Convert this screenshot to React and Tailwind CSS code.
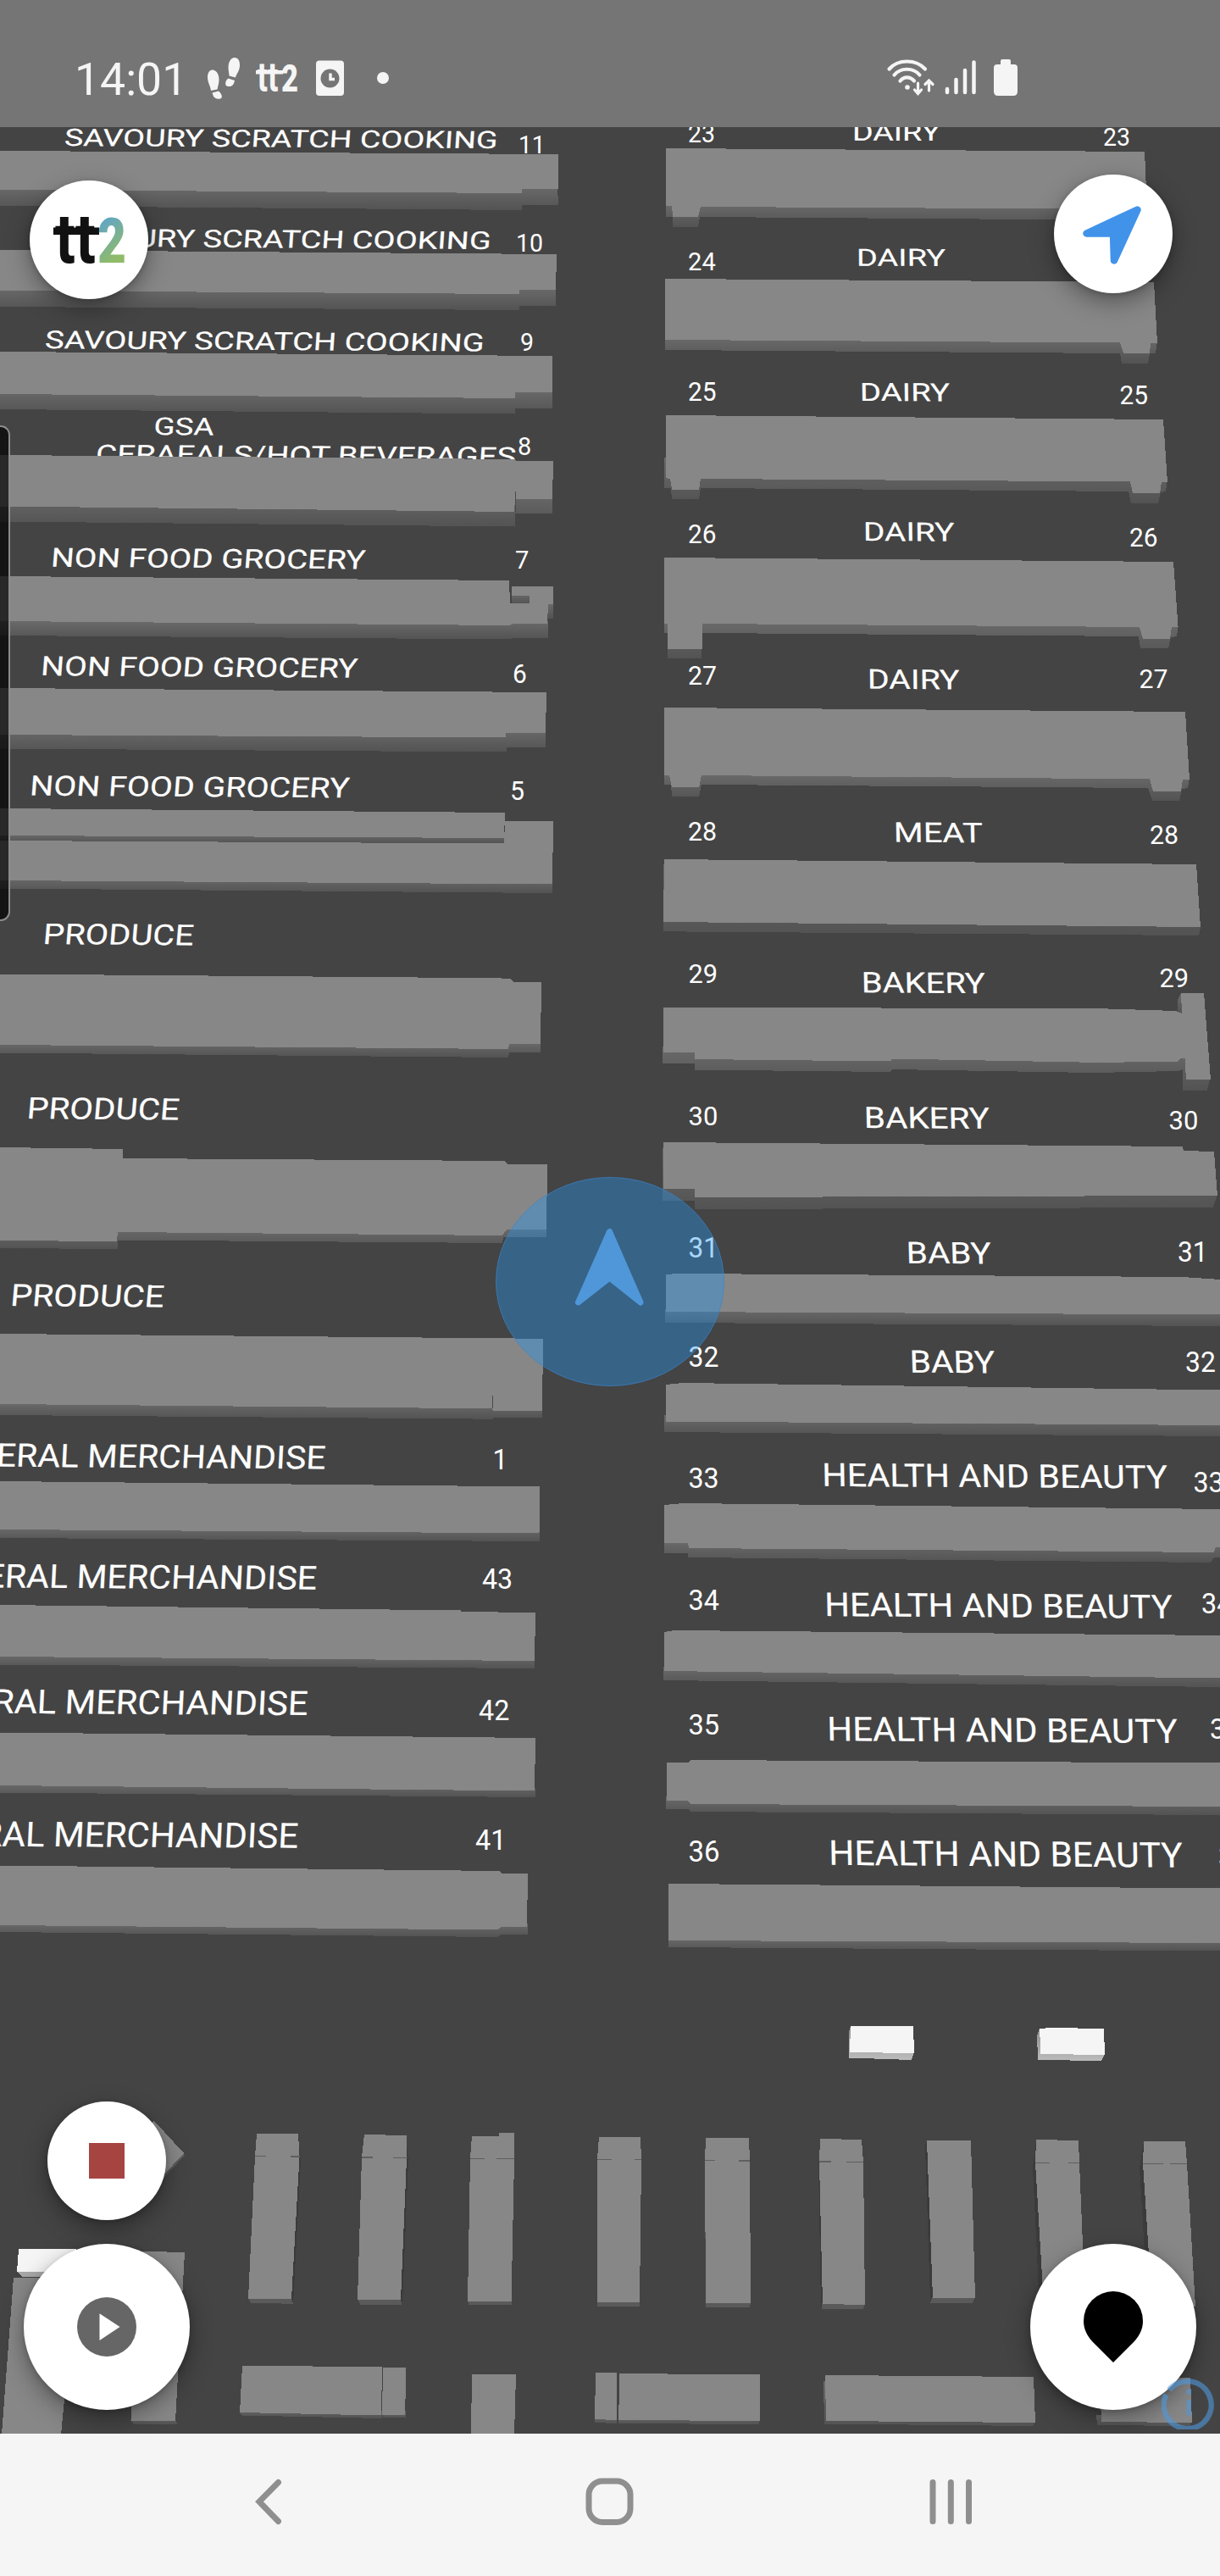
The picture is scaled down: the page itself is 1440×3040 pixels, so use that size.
import React from "react";

// Shelves: top face and extruded side face, in map coordinates.
const SHELVES = [
  { side: "0,220 0,243 616,248 616,242 659,242.5 658,220", top: "0,178 659,182 659,223 616,223 615.5,228 0,224" },
  { side: "0,340 0,362 612.5,366 612.5,361 656,361 656,340", top: "0,295 657,300 656,342 612.5,342 612.5,347 0,343" },
  { side: "0,462 0,483 607.5,488.5 607.5,482 652,482 652,460", top: "0,415 652,420 652,463 607.5,463 607.5,470 0,465" },
  { side: "0,590 0,615.5 607.5,621.5 607.5,606 652,606.5 652,580", top: "0,537 608,542 609,543.5 653,544 652,588.5 608,588.5 607,604 0,597.5" },
  { side: "604,700 625,700 625,713 604,713", top: "0,0" },
  { side: "646,712 653,712 653,730 646,730", top: "0,0" },
  { side: "0,733 0,750 601,754.5 606,753 647,753 647,733", top: "0,680 601,685 602,712 625,712.5 625,703 604,703 604,692 653,692 653,713 647,713 646,736 606,736 601,738 0,733" },
  { side: "0,862 0,883.5 598,887.5 598,882 644,882 644,860", top: "0,812 645,817 644,864.5 597.5,864.5 597,870.5 0,867" },
  { side: "0,1035 0,1048.5 652,1054 652,1040", top: "0,992 595,995.5 596,969 653,969.5 652,1043.5 0,1039" },
  { side: "0,984 0,992 595,995.5 595,987", top: "0,954 596,959 595,989 0,986" },
  { side: "0,1230 0,1242.5 600,1248 601,1241.5 638,1241.5 638,1230", top: "0,1149.5 590,1154.3 603,1155.5 606,1159 639,1159 638,1232 601,1232 600,1238 0,1233" },
  { side: "0,1462 0,1473 139,1474 139,1463.5 593,1467 594,1459.5 645,1459.5 645,1450 139,1452", top: "0,1354 145,1356 145,1367 595,1370 600,1374 646,1374 645,1451 598,1451 593,1458 139,1454 138,1465 0,1464" },
  { side: "0,1655 0,1670 581.5,1674.7 581.5,1672.5 640,1672.5 640,1660", top: "0,1574 641,1579.8 640,1665 582,1665 581,1662.3 0,1657" },
  { side: "0,1803 0,1815 636.5,1819 636.5,1807", top: "0,1748 637,1754.5 636.5,1809.5 0,1805" },
  { side: "0,1953 0,1964.5 631,1969 631,1957", top: "0,1894 544,1900.5 544,1902 632,1903 631,1960 0,1955" },
  { side: "0,2105 0,2115.5 632,2121 632,2110", top: "0,2044.5 632,2051 631,2113.5 0,2107" },
  { side: "0,2270 0,2280 587,2286 592,2283 622.5,2283 622.5,2270", top: "0,2201.5 589,2208 593,2211.3 623,2211.3 622,2274 592,2274 587,2277.5 0,2272" },

  { side: "786,240 786,256 794,256 794,268 824,268 826,256 1354,260 1354,244", top: "786,175 1351,179 1354,247 827,244 824,256 794,255.5 793,243 786,243" },
  { side: "785,398 785,413 1322,417 1324,429 1355,429 1357,417 1364,416.5 1366,402", top: "785,329 1362,333 1366,405 1358,405 1357,417 1326,417 1322,404.5 785,401" },
  { side: "784,540 784,576 792,576 793,589 825,589.5 827,576 1332,580 1335,594 1367,594 1370,581 1376,580 1378,566", top: "785.5,490 1373,495 1378,569 1371,569 1369,582 1337,582 1334,568.5 827,565 825,578 793,577.5 791,565 785.5,564" },
  { side: "784,733 784,747 788,747 788,777 828,777 829,747 1344,751 1346,765 1379,765 1382,752 1389,751 1390.5,738", top: "784,658 1385,663 1390.6,740 1383,740 1381,754 1349,754 1345,740 829,736 829,766 788,766 788,736 784,736" },
  { side: "784,913 784,926 792,926 793,940 825,940 828,926 1355,930 1360,944.5 1392,945 1395,931 1402,930 1404,918", top: "784,835 1399,840 1404,920 1396,920 1394,934 1361,934 1357,919.5 828,915 825,929 793,929 790,915 784,915" },
  { side: "783,1020 783,1099.3 1415,1104 1417.5,1092", top: "784,1014 1412,1020 1417,1094 783,1088" },
  { side: "1390,1180 1394,1172 1396,1197 1390,1196", top: "0,0" },
  { side: "782,1235 782,1255 820,1255 820,1262.5 1051,1265 1053,1262 1290,1266 1390,1264 1396,1262 1396,1286.5 1425,1286.5 1428.5,1272 1420,1235", top: "783,1189 1292,1190 1388,1193 1395,1196 1394,1172 1421,1172 1429,1274 1400,1274 1398.5,1249 1393,1249 1389,1253 1290,1253.8 1053,1249.5 1051,1252.5 820,1250 820,1242 783,1242" },
  { side: "782,1355 782,1417 820,1417 820,1427 1432,1425 1437,1409", top: "783,1348 1396,1353 1397,1358 1433,1359 1437,1411 820,1413 820,1403 783,1403" },
  { side: "785,1545 785,1561 1440,1565 1440,1549", top: "785.5,1504 800,1503 1396,1507 1440,1510 1440,1551.5 785.5,1548" },
  { side: "784,1670 784,1690 1440,1695 1440,1680", top: "785.5,1634 806,1632 1440,1640.5 1440,1682 785.5,1677.5" },
  { side: "784,1819 784,1833 812,1833 812,1838 1429,1844 1433,1838 1440,1838 1440,1824", top: "784,1776 806,1774 1440,1781 1440,1826 1435,1826 1433,1832 813,1827 812,1821 784,1821" },
  { side: "783,1967 783,1983 1440,1991 1440,1978", top: "784,1926 796,1924 1440,1930 1440,1980.5 784,1972" },
  { side: "786,2120 786,2135 812,2135 815,2138 1440,2142 1440,2130", top: "787,2080 812,2080 815,2077 1440,2080.5 1440,2132 815,2129 812,2125 787,2125" },
  { side: "789,2287 789,2298 1440,2302.5 1440,2290", top: "789,2223 1440,2228.5 1440,2293 789,2290" },

  { side: "286,2840 283,2847 286,2850.5 451,2854 451,2845", top: "286,2792 451,2793 450,2850.5 283,2847" },
  { side: "451,2845 452,2853 478.5,2853 478.5,2845", top: "452,2794 479.5,2794 478,2850 451,2850" },
  { side: "0,0", top: "557,2802 609,2802 607,2873 556,2873" },
  { side: "702,2850 702,2859 728,2860 728,2850", top: "703,2800 727.5,2800 728.5,2856 702,2855" },
  { side: "730,2850 730,2860 896,2861 897,2850", top: "731.5,2801 897,2802.5 897,2857 730,2856" },
  { side: "972,2810 973,2860.5 1219,2863 1222,2858", top: "974,2803 1220,2805 1222,2859 975,2857" },
  { side: "1294,2850 1295,2862 1404,2863 1407,2858", top: "1298,2806 1405,2806 1407,2859 1300,2858" },
  { side: "0,0", top: "16,2688 90,2688 72,2873 2,2873" },
  { side: "157,2850 154,2856 158,2861 210,2861 206,2855", top: "155,2656.5 218,2658 207,2857 155,2857" },
  { side: "182,2510 218,2543 190,2574", top: "182,2503 217,2541 192,2568 140,2541" },
];

// Checkout lanes: shadowed flank, front, top and the seam marks.
const LANES = [
  { flank: "352,2518 355,2550 346,2719 343,2713", front: "293,2712 296,2718 346,2718.7 344,2712", top: "303,2518 352,2518 353.5,2545 344,2713 293,2713 301,2545", seam: "M301 2544.5H314M343 2545H354" },
  { flank: "479,2520 482,2550 475,2719 472,2713", front: "422,2713 425,2719.5 474,2719.5 473,2713", top: "430,2519 480,2520 480,2547 473,2714 422,2714 427,2545", seam: "M427 2546H440M464 2546.3H481" },
  { flank: "0,0", front: "552,2714 553,2720 603.5,2720.5 603.5,2715", top: "557,2520.5 589,2520.5 589,2517 607,2517 607,2548 603.5,2716 552,2715.5 555,2547", seam: "M555 2547.3H572M586 2547.3H607" },
  { flank: "0,0", front: "705,2716 705,2722 755,2722.5 755,2716", top: "707,2522 756,2522 757,2549 755,2717 705,2717 705,2548", seam: "M705 2548.5H722M749 2548.7H757" },
  { flank: "0,0", front: "832,2560 833,2723.3 885,2723.3 886,2716", top: "833,2523 884,2523.5 885,2550 886,2718 833,2718 832,2549", seam: "M832 2549.5H844M872 2550H885" },
  { flank: "966,2535 966,2553 969,2724 972,2719", front: "970,2718 970,2725 1019,2725 1021,2718", top: "968,2524 1017,2525 1019,2551 1021,2720 971,2719 967,2551", seam: "M967 2551H981M999 2551.2H1019" },
  { flank: "1094,2526 1092,2533 1098,2716 1102,2712", front: "1100,2711 1098,2718 1148,2718 1151,2710", top: "1094,2526 1146,2526 1151,2712 1101,2712", seam: "" },
  { flank: "1223,2525 1219,2558 1227,2724 1232,2720", front: "0,0", top: "1223,2525 1273,2526 1274,2553 1281,2720 1232,2720 1222,2552", seam: "M1222 2552.3H1239M1261 2552.7H1274" },
  { flank: "1350,2527 1345,2558 1355,2724 1360,2722", front: "0,0", top: "1350,2527 1399,2527 1401,2553 1411,2722 1360,2722 1349,2553", seam: "M1349 2553.3H1373M1381 2553.3H1401" },
];

// Section names: text, left, right, left baseline, right baseline, cap height, slant
const NAMES = [
  ["SAVOURY SCRATCH COOKING", 75.5, 587, 172, 175, 20, -3.5],
  ["SAVOURY SCRATCH COOKING", 64, 579, 290.5, 294, 20.5, -3.5],
  ["SAVOURY SCRATCH COOKING", 52.5, 571, 411, 414.5, 20.7, -3.5],
  ["GSA", 181, 252, 513, 513.5, 20.3, -3],
  ["CERAEALS/HOT BEVERAGES", 112.5, 608.5, 546, 549, 21, -3.5],
  ["NON FOOD GROCERY", 59.5, 430.5, 668.7, 671.3, 22, -4],
  ["NON FOOD GROCERY", 47.5, 421.5, 797, 799.7, 22.5, -4],
  ["NON FOOD GROCERY", 34.5, 411.5, 938.5, 941.3, 23.3, -4],
  ["PRODUCE", 50, 228, 1114, 1115.3, 24, -4.5],
  ["PRODUCE", 31, 211, 1320, 1321.5, 25, -4.5],
  ["PRODUCE", 11.5, 193, 1541, 1542.5, 25.5, -4.5],
  ["GENERAL MERCHANDISE", -85, 384, 1730, 1733.5, 27, -2.5],
  ["GENERAL MERCHANDISE", -99, 373.5, 1872.8, 1875.7, 27.5, -2.5],
  ["GENERAL MERCHANDISE", -115, 363, 2021, 2024, 28, -2.5],
  ["GENERAL MERCHANDISE", -130, 351.5, 2178, 2180.7, 29, -2.5],
  ["DAIRY", 1006, 1110, 165.8, 166, 20, 0],
  ["DAIRY", 1011, 1116, 313.7, 314, 20, 0.5],
  ["DAIRY", 1015, 1121, 473, 473.5, 21, 1],
  ["DAIRY", 1019, 1126.5, 638, 638.7, 21.7, 1],
  ["DAIRY", 1024, 1132.5, 812.5, 813.3, 22.7, 1],
  ["MEAT", 1055, 1160, 993.5, 994.3, 23, 1.5],
  ["BAKERY", 1017, 1163, 1171.2, 1172.2, 24, 1.5],
  ["BAKERY", 1020, 1168, 1331, 1332, 24.7, 1.5],
  ["BABY", 1070, 1170, 1490.7, 1491.3, 25, 2],
  ["BABY", 1074, 1174.5, 1619.7, 1620.3, 26, 2],
  ["HEALTH AND BEAUTY", 970.5, 1378, 1753.8, 1756.5, 27, 1.5],
  ["HEALTH AND BEAUTY", 973.5, 1384, 1907, 1909.8, 27.5, 1.5],
  ["HEALTH AND BEAUTY", 976.5, 1390, 2054, 2057, 28, 1.5],
  ["HEALTH AND BEAUTY", 978.5, 1396, 2200.8, 2203.7, 29, 1.5],
];

// Aisle numbers: text, left, baseline, cap height
const NUMBERS = [
  ["11", 612, 180.7, 20.7], ["10", 609, 297, 21], ["9", 614, 414.3, 21], ["8", 611, 537.3, 21.3],
  ["7", 608, 671.3, 21.5], ["6", 605, 805.7, 22], ["5", 602, 944.3, 22.3], ["1", 581.5, 1734.3, 23.3],
  ["43", 569, 1875.3, 23.7], ["42", 565, 2029.5, 23.8], ["41", 561, 2183.3, 24],
  ["23", 812, 168, 21], ["24", 812, 318.5, 21.5], ["25", 812, 473.2, 22], ["26", 812, 640.8, 22],
  ["27", 812, 807.8, 22.3], ["28", 812, 991.8, 22.4], ["29", 812.5, 1160.2, 22.7], ["30", 812.5, 1328.4, 22.8],
  ["31", 812.5, 1484, 23.3], ["32", 812.5, 1613.2, 23.5], ["33", 812.5, 1756.2, 23.7], ["34", 812.5, 1899.5, 23.8],
  ["35", 812.5, 2046.8, 24], ["36", 812.5, 2197.3, 24.3],
  ["23", 1302, 172, 21], ["25", 1321.5, 476.8, 22], ["26", 1333, 644.8, 22], ["27", 1344.5, 811.8, 22.3],
  ["28", 1357, 996, 22.4], ["29", 1368.5, 1165.1, 22.7], ["30", 1379.5, 1333.4, 22.8], ["31", 1390, 1488.5, 23.3],
  ["32", 1399, 1618.7, 23.5], ["33", 1408.5, 1760.8, 23.7], ["34", 1418, 1904.4, 23.8], ["35", 1428, 2051.8, 24],
  ["36", 1438, 2202.8, 24.3],
];

function Name({ row }) {
  const [text, x1, x2, y1, y2, cap, slant] = row;
  const angle = (Math.atan2(y2 - y1, x2 - x1) * 180) / Math.PI;
  return (
    <text
      transform={`translate(${x1} ${y1}) rotate(${angle}) skewX(${slant})`}
      fontSize={cap / 0.711}
      textLength={x2 - x1}
      lengthAdjust="spacingAndGlyphs"
    >
      {text}
    </text>
  );
}

function StoreMap() {
  return (
    <svg className="block h-[2722px] w-[1440px] overflow-hidden" viewBox="0 150 1440 2722" role="img" aria-label="Store map">
      <defs>
        <linearGradient id="side" x1="0" y1="0" x2="0" y2="1">
          <stop offset="0" stopColor="#6a6a6a" />
          <stop offset="1" stopColor="#535353" />
        </linearGradient>
        <linearGradient id="paleSide" x1="0" y1="0" x2="0" y2="1">
          <stop offset="0" stopColor="#8e8e8e" />
          <stop offset="1" stopColor="#bcbcbc" />
        </linearGradient>
      </defs>
      <g fill="#fff" fontFamily="Roboto, sans-serif" stroke="#fff" strokeWidth="0.15">
        {NAMES.map((row, i) => <Name key={i} row={row} />)}
      </g>
      <g shapeRendering="crispEdges">
        {SHELVES.map((s, i) => (
          <g key={i}>
            <polygon points={s.side} fill="url(#side)" />
            <polygon points={s.top} fill="#878787" />
          </g>
        ))}
        {LANES.map((l, i) => (
          <g key={i}>
            <polygon points={l.flank} fill="#3b3b3b" />
            <polygon points={l.front} fill="#5a5a5a" />
            <polygon points={l.top} fill="#878787" />
            <path d={l.seam} stroke="#5f5f5f" strokeWidth="1.2" />
          </g>
        ))}
        <path d="M581.5 1647V1662M608 580V604" stroke="#4a4a4a" strokeWidth="1" />
        <polygon points="1004,2391 1001.500,2400 1002,2428.500 1076,2431 1079,2422" fill="url(#paleSide)" />
        <polygon points="1004,2391 1078,2391 1079,2423 1003,2422" fill="#f5f5f5" />
        <polygon points="1227,2394 1224,2402 1225,2430.500 1300,2432.500 1304,2424" fill="url(#paleSide)" />
        <polygon points="1227,2394 1240,2393 1303,2394 1304,2425 1228.500,2424" fill="#f5f5f5" />
        <polygon points="20,2680 26,2686.500 90,2686.500 90,2680" fill="#a8a8a8" />
        <polygon points="22,2654 90,2654 90,2681 20,2681" fill="#f5f5f5" />
      </g>
      <g fill="#fff" fontFamily="Roboto, sans-serif">
        {NUMBERS.map(([t, x, y, cap], i) => (
          <text key={i} transform={`translate(${x} ${y}) scale(0.965 1)`} fontSize={cap / 0.711}>{t}</text>
        ))}
      </g>
      <ellipse cx="720" cy="1512.500" rx="134.500" ry="123" fill="#2596f2" fillOpacity="0.39" stroke="#3a85cc" strokeOpacity="0.7" strokeWidth="1" />
      <path d="M719.500 1453.500L682.500 1537L719.500 1508L756 1537Z" fill="#4f97d8" stroke="#4f97d8" strokeWidth="7" strokeLinejoin="round" />
    </svg>
  );
}

function RoundButton({ className, label, children }) {
  return (
    <button
      aria-label={label}
      className={`flex items-center justify-center rounded-full bg-white shadow-[0_10px_28px_rgba(0,0,0,0.36),0_2px_6px_rgba(0,0,0,0.18)] ${className}`}
    >
      {children}
    </button>
  );
}

function StatusBar() {
  return (
    <header className="flex h-[150px] shrink-0 items-center justify-between bg-[#757575] pl-[88px] pr-[237px] pt-[34px] text-[#f5f5f5]">
      <div className="flex items-center">
        <span className="w-[156px] pt-0.5 text-[53.500px] leading-[65px]">14:01</span>
        <svg className="h-[52px] w-[42px]" viewBox="244 66 42 52" fill="currentColor">
          <path d="M245 91C245 85 248 82.500 251 82.500C256 83 258.500 88 258.500 94C258.500 99 257 102 256.500 105.500L249 107C248.500 101 245 98 245 91Z" />
          <path d="M250.500 109.500L258 107.500C261 110 262.500 113 261.500 115.500C259.500 117.500 255 117 252.500 114.500C251.500 113 251 111 250.500 109.500Z" />
          <path d="M283 77C283 71.500 281 68 277 68C272 68.500 270 73 269.500 79C269.500 84 270.500 86.500 270.500 89.500L278 91.500C279 87 283 84 283 77Z" />
          <path d="M277 95L269.500 92.500C266.500 94.500 265.500 98 266.500 100.500C268.500 102.500 272 102.500 274.500 100.500C276 99 276.500 97 277 95Z" />
        </svg>
        <svg className="ml-[10px] h-[52px] w-[62px] overflow-visible" viewBox="296 66 62 52" fill="currentColor" fontFamily="Roboto, sans-serif" fontWeight="700">
          <text x="303.500" y="107.500" fontSize="49" textLength="25" lengthAdjust="spacingAndGlyphs">tt</text>
          <rect x="302" y="83" width="32" height="4.500" />
          <text x="332" y="108" fontSize="44" fontWeight="900" textLength="20" lengthAdjust="spacingAndGlyphs">2</text>
        </svg>
        <svg className="ml-[13px] h-[52px] w-[38px]" viewBox="371 66 38 52">
          <rect x="373" y="71.500" width="33" height="41.500" rx="4" fill="#f5f5f5" />
          <circle cx="389.500" cy="92.500" r="11" fill="#757575" />
          <path d="M390 86.500V93.500H395" fill="none" stroke="#f5f5f5" strokeWidth="3.500" />
        </svg>
        <span className="ml-[36px] size-[14px] rounded-full bg-[#f5f5f5]" />
      </div>
      <div className="flex items-center">
        <svg className="h-[52px] w-[60px]" viewBox="1045 66 60 52" fill="none" stroke="currentColor" strokeLinecap="round">
          <path d="M1049.500 81.500C1060 69.500 1081 69.500 1092 81.500M1055.500 88.500C1063 79.500 1078 79.500 1085.500 88.500M1062.500 95.500C1067 90 1074 90 1079 95.500" strokeWidth="4.200" />
          <circle cx="1071" cy="103" r="2.800" fill="currentColor" stroke="none" />
          <path d="M1083.500 98V110M1079.500 106L1083.500 110.500L1087.500 106M1096.500 107V95.500M1092 99.500L1096.500 95L1101 99.500" strokeWidth="3.200" />
        </svg>
        <svg className="ml-[9px] h-[52px] w-[42px]" viewBox="1114 66 42 52" stroke="currentColor" strokeWidth="4.500" strokeLinecap="round">
          <path d="M1118 105V109M1128.500 94V109M1139 83V109M1149.500 73.500V109" />
        </svg>
        <svg className="ml-[15px] h-[52px] w-[32px]" viewBox="1171 66 32 52" fill="currentColor">
          <path d="M1181 72Q1181 70 1183 70H1191Q1193 70 1193 72V76H1197Q1201 76 1201 80V108Q1201 113 1196 113H1178Q1173 113 1173 108V80Q1173 76 1177 76H1181Z" />
        </svg>
      </div>
    </header>
  );
}

function NavBar() {
  return (
    <nav className="flex h-[168px] shrink-0 items-center justify-between bg-[#f5f5f5] pb-[8px] pl-[296px] pr-[288px]">
      <svg className="size-[60px]" viewBox="296 2922 60 60" fill="none" stroke="#8f8f8f" strokeWidth="7" strokeLinecap="round">
        <path d="M328.500 2929.500L306 2952.300L328.500 2975.500" />
      </svg>
      <svg className="h-[60px] w-[68px]" viewBox="690 2922 68 60" fill="none" stroke="#8f8f8f" strokeWidth="7">
        <rect x="695" y="2928" width="49" height="48.500" rx="16" />
      </svg>
      <svg className="size-[60px]" viewBox="1092 2922 60 60" fill="none" stroke="#8f8f8f" strokeWidth="7" strokeLinecap="round">
        <path d="M1101 2929.500V2975.500M1122.300 2929.500V2975.500M1143.500 2929.500V2975.500" />
      </svg>
    </nav>
  );
}

function Controls() {
  return (
    <div className="absolute inset-0 flex flex-col justify-between pb-7 pt-14">
      <div className="flex items-start justify-between pl-[35px] pr-14">
        <RoundButton label="tt2" className="mt-[7px] size-[140px]">
          <svg className="size-[140px]" viewBox="35 213 140 140" fontFamily="Roboto, sans-serif" fontWeight="700">
            <defs>
              <linearGradient id="brand" x1="0" y1="0" x2="0.300" y2="1">
                <stop offset="0.150" stopColor="#58a2d6" />
                <stop offset="0.850" stopColor="#90bb68" />
              </linearGradient>
            </defs>
            <text x="65" y="309.500" fontSize="82" fill="#111" textLength="48" lengthAdjust="spacingAndGlyphs">tt</text>
            <rect x="63" y="268.500" width="54" height="8.500" fill="#111" />
            <text x="115" y="310" fontSize="75" fontWeight="900" fill="url(#brand)" textLength="34" lengthAdjust="spacingAndGlyphs">2</text>
          </svg>
        </RoundButton>
        <RoundButton label="Centre on my location" className="size-[140px]">
          <svg className="size-[140px]" viewBox="1244 206 140 140">
            <path d="M1342.500 247.500L1282.500 275.500L1314 275.500L1315 307.500Z" fill="#4193ea" stroke="#4193ea" strokeWidth="8.500" strokeLinejoin="round" />
          </svg>
        </RoundButton>
      </div>

      <div className="flex items-end justify-between px-7">
        <div className="flex flex-col items-center gap-7">
          <RoundButton label="Stop" className="size-[140px]">
            <span className="size-[42px] bg-[#a64442]" />
          </RoundButton>
          <RoundButton label="Play" className="size-[196px]">
            <svg className="size-[70px]" viewBox="0 0 70 70">
              <circle cx="35" cy="35" r="35" fill="#666" />
              <path d="M26.500 19.200L50.500 35L26.500 51Z" fill="#fff" />
            </svg>
          </RoundButton>
        </div>
        <RoundButton label="Drop a pin" className="size-[196px]">
          <svg className="h-[84px] w-[70px]" viewBox="0 0 70 84">
            <path d="M35 0A35 35 0 0 1 70 35C70 45 65.500 53 59.500 59.500L35 84L10.500 59.500C4.500 53 0 45 0 35A35 35 0 0 1 35 0Z" />
          </svg>
        </RoundButton>
      </div>
    </div>
  );
}

export default function App() {
  return (
    <div className="flex h-[3040px] w-[1440px] flex-col overflow-hidden bg-[#444444] font-['Roboto',sans-serif]">
      <StatusBar />
      <main className="relative h-[2722px] shrink-0 overflow-hidden">
        <StoreMap />
        <div className="absolute -left-5 top-[352px] h-[585px] w-8 rounded-[11px] border-2 border-[#8c8c8c] bg-black/70" />
        <Controls />
        <svg className="absolute bottom-[5px] right-[5px] size-16" viewBox="0 0 64 64" fill="#4f97dc" fillOpacity="0.6">
          <path d="M9 17.500A28 28 0 1 1 5.500 23" fill="none" stroke="#4f97dc" strokeOpacity="0.6" strokeWidth="6.500" />
          <rect x="29.500" y="17" width="5.500" height="5.500" />
          <rect x="29.500" y="29" width="5.500" height="18.500" />
        </svg>
      </main>
      <NavBar />
    </div>
  );
}
